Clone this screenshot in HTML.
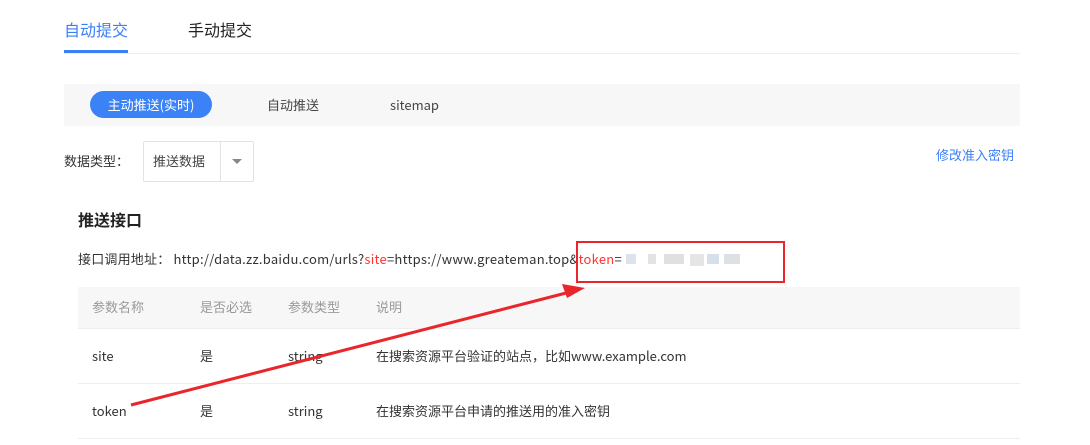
<!DOCTYPE html>
<html><head><meta charset="utf-8"><style>
body{margin:0;width:1090px;height:445px;background:#fff;position:relative;overflow:hidden;font-family:"Noto Sans CJK SC","Liberation Sans",sans-serif;color:#333;font-size:13px}
.a{position:absolute;white-space:nowrap;line-height:18px}
</style></head><body>
<div class="a" style="left:64px;top:19px;font-size:16px;line-height:20px;color:#3b7ff5">自动提交</div>
<div class="a" style="left:188px;top:19px;font-size:16px;line-height:20px;color:#222">手动提交</div>
<div class="a" style="left:64px;top:50px;width:64px;height:3px;background:#3b7ff5"></div>
<div class="a" style="left:64px;top:53px;width:956px;height:1px;background:#eee"></div>
<div class="a" style="left:64px;top:84px;width:956px;height:42px;background:#f7f7f7"></div>
<div class="a" style="left:90px;top:91px;width:122px;height:27px;border-radius:14px;background:#3c82f7;color:#fff;text-align:center;line-height:27px">主动推送(实时)</div>
<div class="a" style="left:267px;top:96px;color:#444">自动推送</div>
<div class="a" style="left:390px;top:96px;color:#444">sitemap</div>
<div class="a" style="left:64px;top:152px;color:#333">数据类型：</div>
<div class="a" style="left:143px;top:141px;width:109px;height:39px;border:1px solid #e3e3e3;border-radius:2px"></div>
<div class="a" style="left:220px;top:142px;width:1px;height:39px;background:#e3e3e3"></div>
<div class="a" style="left:153px;top:152px;color:#444">推送数据</div>
<div class="a" style="left:232px;top:159px;width:0;height:0;border-left:5px solid transparent;border-right:5px solid transparent;border-top:5px solid #888"></div>
<div class="a" style="left:936px;top:146px;color:#3b7ff5">修改准入密钥</div>
<div class="a" style="left:78px;top:209px;font-size:16px;line-height:20px;font-weight:bold;color:#222">推送接口</div>
<div class="a" style="left:78px;top:250px;color:#333;letter-spacing:0.2px">接口调用地址： <span style="letter-spacing:0.25px">http://data.zz.baidu.com/urls?<span style="color:#f33">site</span>=https://www.greateman.top&amp;<span style="color:#f33">token</span>=</span></div>
<div class="a" style="left:626px;top:254px;width:10px;height:10px;background:#dde3ea"></div>
<div class="a" style="left:648px;top:254px;width:8px;height:10px;background:#e3e3e3"></div>
<div class="a" style="left:664px;top:254px;width:20px;height:10px;background:#e0e0e0"></div>
<div class="a" style="left:690px;top:254px;width:14px;height:12px;background:#e5e5e5"></div>
<div class="a" style="left:707px;top:254px;width:12px;height:10px;background:#d6e0ea"></div>
<div class="a" style="left:724px;top:254px;width:16px;height:10px;background:#dde0e4"></div>
<div class="a" style="left:576px;top:241px;width:205px;height:38px;border:2px solid #e8262b"></div>
<div class="a" style="left:78px;top:287px;width:942px;height:41px;background:#f7f7f7;border-bottom:1px solid #eee"></div>
<div class="a" style="left:92px;top:298px;color:#999">参数名称</div>
<div class="a" style="left:200px;top:298px;color:#999">是否必选</div>
<div class="a" style="left:288px;top:298px;color:#999">参数类型</div>
<div class="a" style="left:376px;top:298px;color:#999">说明</div>
<div class="a" style="left:78px;top:383px;width:942px;height:1px;background:#eee"></div>
<div class="a" style="left:78px;top:438px;width:942px;height:1px;background:#eee"></div>
<div class="a" style="left:92px;top:347px">site</div>
<div class="a" style="left:200px;top:347px">是</div>
<div class="a" style="left:288px;top:347px">string</div>
<div class="a" style="left:376px;top:347px">在搜索资源平台验证的站点，比如www.example.com</div>
<div class="a" style="left:92px;top:402px">token</div>
<div class="a" style="left:200px;top:402px">是</div>
<div class="a" style="left:288px;top:402px">string</div>
<div class="a" style="left:376px;top:402px">在搜索资源平台申请的推送用的准入密钥</div>
<svg class="a" style="left:0;top:0" width="1090" height="445">
<line x1="131" y1="405" x2="570" y2="292" stroke="#e8262b" stroke-width="3"/>
<polygon points="585,288 562,284 567,298" fill="#e8262b"/>
</svg>
</body></html>
